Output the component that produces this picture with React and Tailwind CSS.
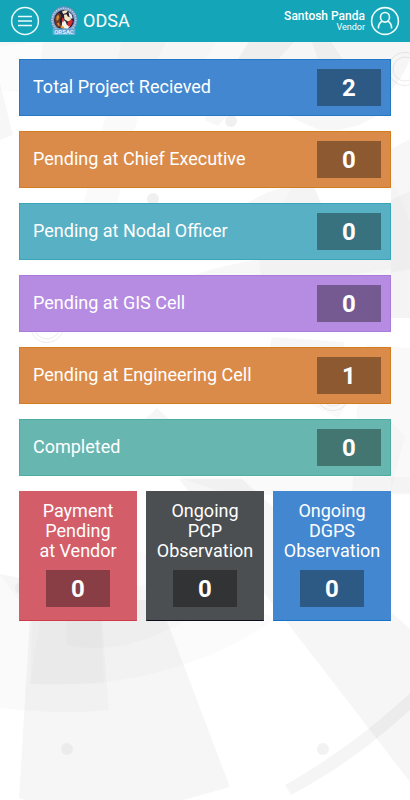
const statusRows = [
  { label: 'Total Project Recieved', count: 2, color: 'bg-[#4287cf] border-[#2478c6]', countColor: 'bg-[#2d5985]' },
  { label: 'Pending at Chief Executive', count: 0, color: 'bg-[#db8b49] border-[#d27c24]', countColor: 'bg-[#8d5930]' },
  { label: 'Pending at Nodal Officer', count: 0, color: 'bg-[#58b0c4] border-[#36a6b8]', countColor: 'bg-[#39727f]' },
  { label: 'Pending at GIS Cell', count: 0, color: 'bg-[#b58ce2] border-[#ab7bdc]', countColor: 'bg-[#755a91]' },
  { label: 'Pending at Engineering Cell', count: 1, color: 'bg-[#db8b49] border-[#d27c24]', countColor: 'bg-[#8d5930]' },
  { label: 'Completed', count: 0, color: 'bg-[#67b6b0] border-[#4dada4]', countColor: 'bg-[#437670]' },
];

const tiles = [
  { lines: ['Payment', 'Pending', 'at Vendor'], count: 0, color: 'bg-[#d35d69] border-[#d35d69] border-b-[#ce3a4a]', countColor: 'bg-[#893d45]' },
  { lines: ['Ongoing', 'PCP', 'Observation'], count: 0, color: 'bg-[#4b4f52] border-[#4b4f52] border-b-[#0c0c1c]', countColor: 'bg-[#313335]' },
  { lines: ['Ongoing', 'DGPS', 'Observation'], count: 0, color: 'bg-[#4287cf] border-[#4287cf] border-b-[#1473c8]', countColor: 'bg-[#2d5985]' },
];

const Count = ({ value, color }) => (
  <span className={`flex h-[37px] w-16 shrink-0 items-center justify-center text-2xl font-bold ${color}`}>
    {value}
  </span>
);

const MenuIcon = () => (
  <svg viewBox="0 0 30 30" className="h-[30px] w-[30px]" fill="none" stroke="#e9fbfc" aria-hidden="true">
    <circle cx="15" cy="15" r="13.4" strokeWidth="1.5" />
    <path d="M8 10.4h14M8 15h14M8 19.6h14" strokeWidth="1.5" />
  </svg>
);

const UserIcon = () => (
  <svg viewBox="0 0 30 30" className="h-[30px] w-[30px]" fill="none" stroke="#f0fdfd" aria-hidden="true">
    <circle cx="15" cy="15" r="13.4" strokeWidth="1.6" />
    <ellipse cx="15" cy="11.3" rx="4.5" ry="4.8" strokeWidth="1.6" />
    <path d="M8.4 22.4c0-4 1.5-6.3 4.2-7.4M21.6 22.4c0-4-1.5-6.3-4.2-7.4" strokeWidth="1.6" />
  </svg>
);

const Logo = () => (
  <svg viewBox="0 0 28 30" className="h-[30px] w-7" role="img" aria-label="ORSAC">
    <circle cx="14" cy="14" r="13.4" fill="#7f9fc6" />
    <circle cx="14" cy="14" r="12" fill="none" stroke="#bcd2e8" strokeWidth="1.8" strokeDasharray="1.2 1.3" />
    <circle cx="14" cy="14" r="13.2" fill="none" stroke="#4f7bb0" strokeWidth="0.6" />
    <circle cx="14" cy="14" r="10" fill="#201f36" />
    <path d="M4.6 13.5c.5-3 2.2-5.5 4.5-7l2.4 3.2-1.8 4.2 1.5 6.6-2.8 1.2c-2.2-1.7-3.8-4.8-3.8-8.2z" fill="#6a3a24" />
    <path d="M6.3 11l1.8-2.4 1.3 2.5-1.2 3-1.7.7zM7 17.2l2-.6.8 2.8-1.6.6z" fill="#d88836" />
    <path d="M12 5.6l3-1.4 3 .5-1.8 2.4-3 .8zM14 8.8l2.6-.5 1.2 2.3 2.8 1 .4 3-3.2.8-3.4-2.2z" fill="#f6e6c2" />
    <path d="M18.6 5.8l3 2.8 1.2 3.6-1.8.6-1.8-2.8z" fill="#e8edf2" />
    <path d="M12.4 13.2l3.2 2.2 1.2 3.4 3.2 1.8-2.6 2.5-5.8-1.2.3-3.6z" fill="#f7f3e8" />
    <path d="M18.2 15.6l3.6-2.4 1 2.2-1.8 4-2.6 1.2-1.2-2.6zM12.3 11.6l1.8 1.4-.8 3.4-1.6-1.6z" fill="#d62e30" />
    <path d="M10.8 19.4l2.8 1 .8 2.2-3.8-.8z" fill="#e79a33" />
    <path d="M3.2 22.8h21.6v5.6H3.2z" fill="#5c99cf" stroke="#90c6e6" strokeWidth="0.6" />
    <text x="14" y="27.8" textAnchor="middle" fontSize="6" fontWeight="700" fill="#e5f3fb">ORSAC</text>
  </svg>
);

const Backdrop = () => (
  <svg
    viewBox="0 0 410 800"
    preserveAspectRatio="xMidYMin slice"
    className="pointer-events-none absolute inset-0 h-full w-full"
    aria-hidden="true"
  >
    <g fill="#000">
      {/* top shapes */}
      <path d="M0 40h410v20C400 82 386 100 372 106L0 90z" fillOpacity="0.035" />
      <path d="M0 46l43-4-6 47-37 2z" fill="#fff" fillOpacity="0.7" />
      <path d="M0 83l13 52-13 5z" fillOpacity="0.03" />
      <path d="M121 42h45C140 95 130 150 116 210H82C95 155 112 95 121 42z" fillOpacity="0.02" />
      <path d="M216 42h34l-18 24-28-4z" fill="#fff" fillOpacity="0.35" />
      <path d="M248 42h46l-76 84-14-6z" fillOpacity="0.03" />
      <path d="M312 42h19l50 72-24 12-18 4h-20l-38-17h55z" fillOpacity="0.03" />
      {/* right side polygons */}
      <path d="M391 149l19-10v179h-19z" fillOpacity="0.03" />
      <path d="M391 174l19 48v96h-19z" fillOpacity="0.01" />
      <path d="M391 200l19-9v78l-19 4z" fillOpacity="0.025" />
      <path d="M243 206c14-10 30-17 45-19h26l8 18z" fillOpacity="0.03" />
      <path d="M284 200l8-13h22l8 18h-38z" fillOpacity="0.012" />
      <path d="M190 276c24-8 48-13 69-17h132v20H200z" fillOpacity="0.03" />
      <path d="M259 259h69l3 18h-70zM328 259h63v10l-62 9z" fillOpacity="0.02" />
      <path d="M272 337l72 5v13l-74-8z" fillOpacity="0.03" />
      <path d="M367 345l43 3v145h-58l5-84z" fillOpacity="0.025" />
      <path d="M310 404h36l-7 15z" fillOpacity="0.02" />
      <path d="M391 421l14 15-14 55z" fillOpacity="0.015" />
      <path d="M157 408l12 11h-24z" fillOpacity="0.035" />
      {/* lower fans */}
      <path d="M177 477h233v18L230 495z" fillOpacity="0.02" />
      <path d="M179 479h63l168 150v153L258 585z" fillOpacity="0.035" />
      <path d="M0 574l40 7 100-30 135 68C200 672 115 688 30 684l2-64z" fillOpacity="0.014" />
      <path d="M0 574l100 20 9 116C70 714 35 712 0 708z" fillOpacity="0.02" />
      <path d="M31 600h128l71 187-46 13H25l-6-2z" fillOpacity="0.034" />
      <path d="M40 618h61l3 66H30z" fillOpacity="0.01" />
      <path d="M65 600l80-15 40 36C148 643 105 654 67 645z" fillOpacity="0.014" />
      <path d="M285 785c54-31 90-60 125-92v17c-34 31-70 59-119 85z" fillOpacity="0.04" />
      {/* dots */}
      <circle cx="231" cy="121" r="6" fillOpacity="0.06" />
      <circle cx="153" cy="199" r="6" fillOpacity="0.06" />
      <circle cx="21" cy="588" r="6" fillOpacity="0.04" />
      <circle cx="67" cy="749" r="6" fillOpacity="0.045" />
      <circle cx="323" cy="749" r="6" fillOpacity="0.05" />
    </g>
    <g fill="none" stroke="#000" strokeOpacity="0.1" strokeWidth="0.8">
      <circle cx="405" cy="69" r="16.5" />
      <circle cx="405" cy="69" r="12" />
      <circle cx="47" cy="326" r="16.5" />
      <circle cx="47" cy="326" r="13" />
      <circle cx="333" cy="394" r="16.5" />
      <circle cx="333" cy="394" r="12" />
    </g>
  </svg>
);

const Header = () => (
  <header className="relative flex h-[42px] items-center justify-between bg-[#14a5b8] px-[10px] text-white">
    <div className="flex items-center">
      <button type="button" aria-label="Open menu" className="cursor-pointer">
        <MenuIcon />
      </button>
      <div className="ml-[10px]">
        <Logo />
      </div>
      <h1 className="ml-[5px] text-lg">ODSA</h1>
    </div>
    <div className="flex items-center gap-[5px]">
      <div className="text-right">
        <p className="text-xs leading-3 font-medium">Santosh Panda</p>
        <p className="text-[9px] leading-[10px]">Vendor</p>
      </div>
      <button type="button" aria-label="Profile" className="cursor-pointer">
        <UserIcon />
      </button>
    </div>
  </header>
);

const App = () => {
  return (
    <div className="relative min-h-screen overflow-hidden bg-white font-['Roboto',sans-serif]">
      <Backdrop />
      <Header />
      <main className="relative flex flex-col gap-[15px] px-[19px] pt-[17px] pb-8 text-white">
        {statusRows.map((row) => (
          <section
            key={row.label}
            className={`flex items-center justify-between border py-[9px] pr-[9px] pl-[13px] ${row.color}`}
          >
            <h2 className="pb-0.5 text-lg">{row.label}</h2>
            <Count value={row.count} color={row.countColor} />
          </section>
        ))}

        <div className="grid grid-cols-3 gap-[9px]">
          {tiles.map((tile) => (
            <section
              key={tile.lines.join(' ')}
              className={`flex flex-col items-center gap-[9px] border pt-[9px] pb-[13px] ${tile.color}`}
            >
              <h2 className="text-center text-lg leading-5">
                {tile.lines.map((line) => (
                  <span key={line} className="block">{line}</span>
                ))}
              </h2>
              <Count value={tile.count} color={tile.countColor} />
            </section>
          ))}
        </div>
      </main>
    </div>
  );
};

export default App;
